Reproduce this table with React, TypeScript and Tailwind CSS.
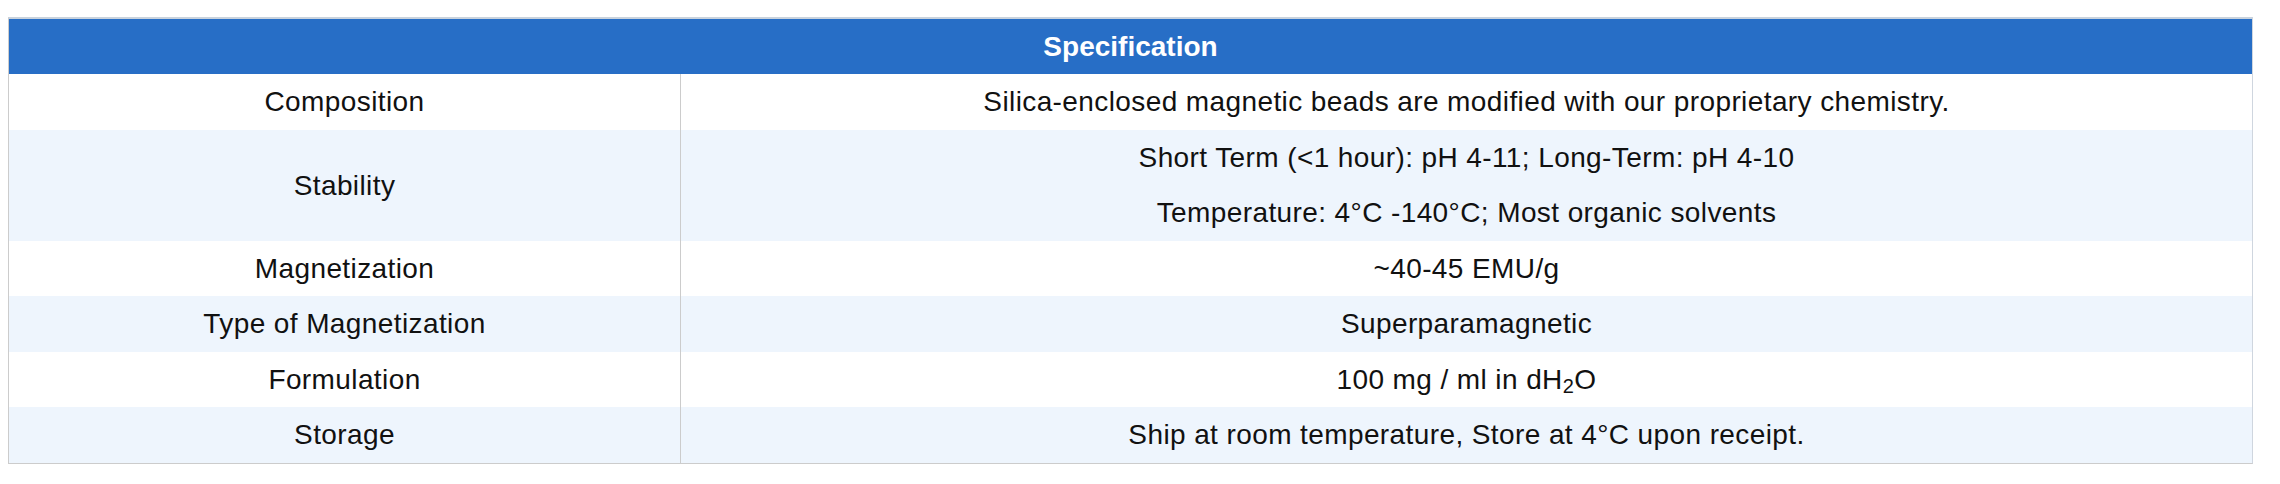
import React from "react";

type Row = {
  label: string;
  lines: React.ReactNode[];
  h: string;
  shaded?: boolean;
};

const rows: Row[] = [
  {
    label: "Composition",
    lines: ["Silica-enclosed magnetic beads are modified with our proprietary chemistry."],
    h: "h-[56px]",
  },
  {
    label: "Stability",
    lines: [
      "Short Term (<1 hour): pH 4-11; Long-Term: pH 4-10",
      "Temperature: 4°C -140°C; Most organic solvents",
    ],
    h: "h-[111px]",
    shaded: true,
  },
  { label: "Magnetization", lines: ["~40-45 EMU/g"], h: "h-[55px]" },
  { label: "Type of Magnetization", lines: ["Superparamagnetic"], h: "h-[56px]", shaded: true },
  {
    label: "Formulation",
    lines: [
      <>
        100 mg / ml in dH<sub className="relative top-[6px] align-baseline text-[20px] leading-none">2</sub>O
      </>,
    ],
    h: "h-[55px]",
  },
  {
    label: "Storage",
    lines: ["Ship at room temperature, Store at 4°C upon receipt."],
    h: "h-[56px]",
    shaded: true,
  },
];

export default function App() {
  return (
    <div className="min-h-[484px] bg-white pt-[17px] pl-[8px] font-['Liberation_Sans',Arial,sans-serif] text-[28px] text-[#111111]">
      <div className="w-[2245px] border border-[#cccccc] border-t-2 border-t-[#c8d2dd] border-r-[#cfd6df]">
        <div className="flex h-[55px] items-center justify-center bg-[#276ec6] font-bold text-white">
          Specification
        </div>
        {rows.map((row) => (
          <div
            key={row.label}
            className={`grid grid-cols-[672px_1fr] tracking-[0.4px] ${row.h} ${row.shaded ? "bg-[#eef5fd]" : "bg-white"}`}
          >
            <div className="flex items-center justify-center border-r border-[#cccccc]">{row.label}</div>
            <div className="flex flex-col justify-center">
              {row.lines.map((line, i) => (
                <p key={i} className="flex h-[55.5px] items-center justify-center">
                  {line}
                </p>
              ))}
            </div>
          </div>
        ))}
      </div>
    </div>
  );
}
